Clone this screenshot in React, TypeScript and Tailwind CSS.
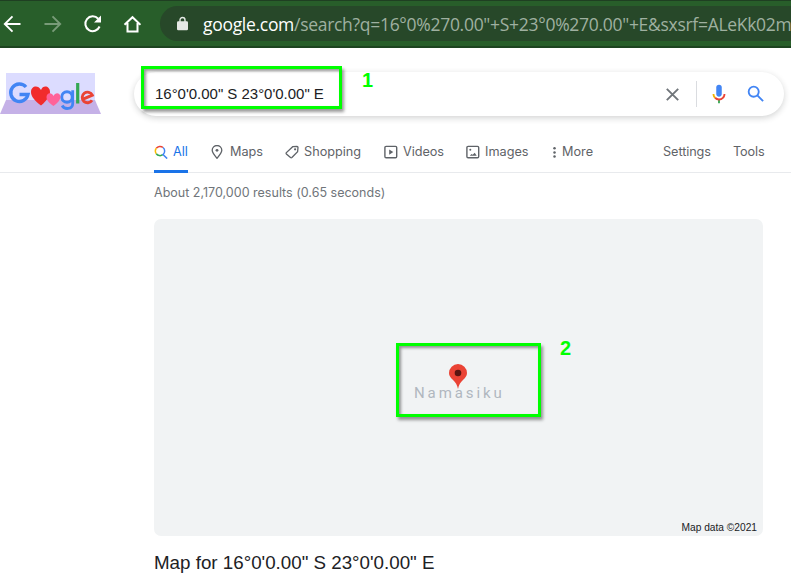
import type { ReactNode } from 'react';

const stroke = { fill: 'none', stroke: 'currentColor' } as const;

function BrowserBar() {
  return (
    <header className="flex h-12 items-center border-t border-b-2 border-t-[#1f3f22] border-b-[#1d4420] bg-[#285e2a] text-white">
      <div className="flex w-[160px] shrink-0 items-center">
        <svg className="ml-[3px] h-[18px] w-[18px]" viewBox="0 0 18 18" {...stroke} strokeWidth="1.9">
          <path d="M17.5 9H2M9.5 1.3 1.8 9l7.7 7.7" />
        </svg>
        <svg className="ml-[23px] h-[18px] w-[18px] text-[#789b78]" viewBox="0 0 18 18" {...stroke} strokeWidth="1.9">
          <path d="M.5 9H16M8.5 1.3 16.2 9l-7.700 7.7" />
        </svg>
        <svg className="ml-[21px] h-5 w-5" viewBox="0 0 20 20" {...stroke} strokeWidth="2">
          <path d="M15.2 4.700A7.4 7.4 0 1 0 16.600 12.5" />
          <path d="M18 1.500v7h-7z" fill="currentColor" stroke="none" />
        </svg>
        <svg className="ml-5 h-[18px] w-[18px]" viewBox="0 0 18 18" {...stroke} strokeWidth="2">
          <path d="M1.500 9.8 9.500 2.200l8 7.600M4.500 8V16.500h10V8" />
        </svg>
      </div>
      <div className="flex h-[35px] min-w-0 flex-1 items-center overflow-hidden rounded-l-full bg-[#274829]">
        <svg className="ml-[17px] h-[15px] w-[11px] shrink-0 text-[#e4e8e4]" viewBox="0 0 11 15">
          <path d="M3 6V4a2.5 2.5 0 0 1 5 0v2" {...stroke} strokeWidth="1.4" />
          <rect y="5.3" width="11" height="9" rx="1.2" fill="currentColor" />
        </svg>
        <div className="ml-[15px] whitespace-nowrap font-['Open_Sans',sans-serif] text-[17.5px] leading-[34px] text-[#9fb0a0]">
          <span className="inline-block w-[91px] tracking-[-0.3px] text-white">google.com</span>
          <span className="tracking-[-0.29px]">/search?q=16°0%270.00"+S+23°0%270.00"+E&amp;sxsrf=ALeKk02m</span>
        </div>
      </div>
    </header>
  );
}

function Doodle() {
  return (
    <svg className="mt-[12px] h-[43px] w-[101px] shrink-0" viewBox="0 0 101 43">
      <path d="M6 1h89v28H6z" fill="#dcdcff" />
      <path d="M6 28h89l6 14H0z" fill="#c5b1e7" />
      <g fill="none">
        <path d="M26 15A8.700 8.700 0 1 0 28 22.500H19.500" stroke="#4285f4" strokeWidth="3.400" />
        <circle cx="67" cy="25" r="5.3" stroke="#4285f4" strokeWidth="3" />
        <path d="M72.700 18.300v13.200c0 6-8.200 6.500-10.500 2" stroke="#4285f4" strokeWidth="2.800" />
        <path d="M77.700 11v20.500" stroke="#34a853" strokeWidth="3.200" />
        <path d="m82.500 27.300 9.800-4.100a5.300 5.300 0 1 0-.3 5.100" stroke="#ea4335" strokeWidth="2.900" />
      </g>
      <path d="M41 33.500C34.500 28.500 31 24.500 31 20c0-6 7-7.500 10-2 2-5.500 9-4 9 2 0 4-3 8.500-9 13.500z" fill="#f12c2c" />
      <path d="M53.500 34c-5-3.500-7-6-7-9 0-4 5-5.500 7-1 2-4.500 7-3 7 1 0 3-3 6-7 9z" fill="#ff6299" />
    </svg>
  );
}

function Magnifier({ className }: { className: string }) {
  return (
    <svg className={className} viewBox="0 0 24 24" fill="#4285f4">
      <path d="M20.49 19l-5.73-5.73C15.53 12.2 16 10.91 16 9.5A6.5 6.5 0 1 0 9.5 16c1.41 0 2.7-.47 3.77-1.24L19 20.49 20.49 19zM5 9.5C5 7.01 7.01 5 9.5 5S14 7.01 14 9.5 11.99 14 9.5 14 5 11.99 5 9.5z" />
    </svg>
  );
}

function SearchBox() {
  return (
    <div className="relative ml-[33px] mt-[12px] flex h-[44px] w-[650px] items-center rounded-full bg-white shadow-[0_2px_6px_rgba(32,33,36,0.2)]">
      <span className="ml-[21px] w-[505px] whitespace-nowrap text-[15px] tracking-[-0.02px] text-[#202124]">16°0'0.00" S 23°0'0.00" E</span>
      <svg className="ml-[6px] h-[13px] w-[13px] text-[#70757a]" viewBox="0 0 13 13" {...stroke} strokeWidth="1.9">
        <path d="m.8.8 11.4 11.4M12.2.8.8 12.2" />
      </svg>
      <span className="ml-[17px] h-[26px] w-px bg-[#dadce0]" />
      <svg className="ml-[11px] h-[22px] w-[22px]" viewBox="0 0 24 24">
        <path fill="#4285f4" d="M12 15c1.66 0 3-1.31 3-2.97v-7.02a3 3 0 0 0-6 0v7.02C9 13.69 10.34 15 12 15z" />
        <path fill="#34a853" d="M11 18.08h2v3.92h-2z" />
        <path fill="#f4b400" d="M7.05 16.87C5.78 15.59 5 13.95 5 12h2c0 1.45.56 2.42 1.47 3.38z" />
        <path fill="#ea4335" d="M12 16.93a4.97 5.25 0 0 1-3.54-1.55l-1.41 1.49c1.26 1.28 3.02 2.13 4.95 2.13 3.87 0 6.99-2.92 6.99-7h-1.99c0 2.92-2.24 4.93-5 4.93z" />
      </svg>
      <Magnifier className="ml-[15px] h-[22px] w-[22px]" />
      <div className="absolute left-[7px] top-[-6px] h-[43px] w-[201px] border-[3px] border-[#00ff00] shadow-[2px_3px_3px_rgba(0,0,0,0.4),inset_2px_2px_3px_rgba(0,0,0,0.4)]" />
      <span className="absolute left-[228px] top-[-4px] text-[20px] font-bold leading-[24px] text-[#00ff00]">1</span>
    </div>
  );
}

function Tab({ icon, label, className }: { icon: ReactNode; label: string; className: string }) {
  return (
    <a className={`flex h-full shrink-0 items-center whitespace-nowrap ${className}`}>
      {icon}
      <span>{label}</span>
    </a>
  );
}

function Tabs() {
  const size = 'h-[14px] w-[14px] shrink-0';
  return (
    <nav className="flex h-[43px] pt-px shadow-[inset_0_-1px_0_#e8eaed] pl-[154px] font-['Inter',sans-serif] text-[12.7px] text-[#5f6368]">
      <Tab className="mr-[22px] w-[34px] gap-[5px] text-[#1a73e8] shadow-[inset_0_-3px_0_#1a73e8]" label="All" icon={
        <svg className={size} viewBox="0 0 14 14" fill="none" strokeWidth="1.5">
          <path d="M2.3 3.3A4.6 4.6 0 0 1 9 2.5" stroke="#ea4335" />
          <path d="M2.3 3.3a4.6 4.6 0 0 0 0 5.4" stroke="#fbbc04" />
          <path d="M2.3 8.7a4.6 4.6 0 0 0 6.5 1" stroke="#34a853" />
          <path d="M9 2.5a4.6 4.6 0 0 1 0 7.1l4.2 4" stroke="#4285f4" />
        </svg>} />
      <Tab className="w-[75px] gap-[6px]" label="Maps" icon={
        <svg className={size} viewBox="0 0 14 14" {...stroke} strokeWidth="1.3">
          <path d="M7 13.3C4 9.8 2.2 7.5 2.2 5.3a4.8 4.8 0 0 1 9.6 0c0 2.2-1.8 4.5-4.8 8z" />
          <circle cx="7" cy="5.3" r="1.4" fill="currentColor" stroke="none" />
        </svg>} />
      <Tab className="w-[99px] gap-[5px]" label="Shopping" icon={
        <svg className={size} viewBox="0 0 14 14" {...stroke} strokeWidth="1.3">
          <path d="M7.700 1.700 12 1.500q1 0 1 1L12.600 6.600 6.900 12.500q-.7.6-1.400 0L1.400 9q-.6-.7 0-1.400z" />
          <circle cx="10.1" cy="4.300" r="1.1" fill="currentColor" stroke="none" />
        </svg>} />
      <Tab className="w-[82px] gap-[5px] tracking-[-0.05px]" label="Videos" icon={
        <svg className={size} viewBox="0 0 14 14" {...stroke} strokeWidth="1.4">
          <rect x=".9" y="1.4" width="11.8" height="11.4" rx="1.2" />
          <path d="M5.2 4.4v5.4L9.3 7z" fill="currentColor" stroke="none" />
        </svg>} />
      <Tab className="w-[82px] gap-[5px]" label="Images" icon={
        <svg className={size} viewBox="0 0 14 14" {...stroke} strokeWidth="1.4">
          <rect x=".9" y="1.4" width="11.8" height="11.4" rx="1.2" />
          <path d="M3.8 10.700 5.500 8.900l1.200.8L8.700 7.700l2 3z" fill="currentColor" stroke="none" />
          <circle cx="4.3" cy="4.700" r="1" fill="currentColor" stroke="none" />
        </svg>} />
      <Tab className="w-[115px] gap-[1px]" label="More" icon={
        <svg className="ml-px h-[14px] w-3" viewBox="0 0 12 14" fill="currentColor">
          <circle cx="5.5" cy="3.3" r="1.25" /><circle cx="5.5" cy="7.4" r="1.25" /><circle cx="5.5" cy="11.5" r="1.25" />
        </svg>} />
      <span className="flex w-[70px] items-center tracking-[-0.08px]">Settings</span>
      <span className="flex items-center tracking-[-0.15px]">Tools</span>
    </nav>
  );
}

function MapCard() {
  return (
    <section className="relative mt-[17px] h-[317px] w-[609px] rounded-[7px] bg-[#f1f3f4]">
      <span className="absolute left-[260px] top-[165px] whitespace-nowrap font-['Roboto',sans-serif] text-[15px] leading-[18px] tracking-[2.9px] text-[#b0b7bf]">Namasiku</span>
      <svg className="absolute left-[294px] top-[144px] h-[27px] w-[20px]" viewBox="0 0 20 27">
        <path d="M10 26c-.7-4-2.5-6.5-5.2-9.2C2.5 14.5 1 12.7 1 10a9 9 0 0 1 18 0c0 2.7-1.5 4.5-3.8 6.8C12.5 19.5 10.7 22 10 26z" fill="#ea4335" />
        <circle cx="10" cy="10" r="3.3" fill="#5a1511" />
      </svg>
      <div className="absolute left-[242px] top-[124px] h-[74px] w-[145px] border-[3px] border-[#00ff00] shadow-[2px_3px_3px_rgba(0,0,0,0.4),inset_2px_2px_3px_rgba(0,0,0,0.4)]" />
      <span className="absolute left-[406px] top-[117px] text-[20px] font-bold leading-[24px] text-[#00ff00]">2</span>
      <span className="absolute bottom-px right-[6px] whitespace-nowrap text-[10.2px] leading-[14px] text-[#202124]">Map data ©2021</span>
    </section>
  );
}

export default function App() {
  return (
    <div className="h-[574px] w-[791px] overflow-hidden bg-white font-['Liberation_Sans',Arial,sans-serif]">
      <BrowserBar />
      <div className="flex h-[82px] pt-[12px]">
        <Doodle />
        <SearchBox />
      </div>
      <Tabs />
      <main className="ml-[154px]">
        <p className="mt-[11px] h-[18px] whitespace-nowrap font-['Inter',sans-serif] text-[12.5px] leading-[18px] tracking-[0.01px] text-[#70757a]">About 2,170,000 results (0.65 seconds)</p>
        <MapCard />
        <h1 className="mt-[15px] whitespace-nowrap text-[18.75px] leading-[24px] text-[#202124]">Map for 16°0'0.00" S 23°0'0.00" E</h1>
      </main>
    </div>
  );
}
